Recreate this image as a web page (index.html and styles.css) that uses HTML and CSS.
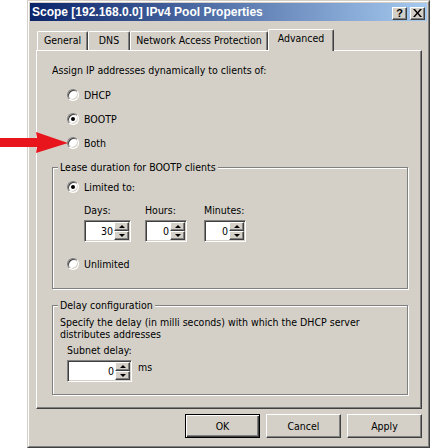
FILE: index.html
```html
<!DOCTYPE html>
<html>
<head>
<meta charset="utf-8">
<link rel="stylesheet" href="styles.css">
</head>
<body>
<div class="dialog">
  <div class="frame">
    <div class="titlebar">
      <span class="title">Scope [192.168.0.0] IPv4 Pool Properties</span>
      <div class="tbtns">
        <div class="tbtn">?</div>
        <div class="tbtn"><svg width="9" height="8" viewBox="0 0 9 8"><path d="M0 0h2l2.5 3 2.5-3h2l-3.5 4 3.5 4h-2l-2.5-3-2.5 3h-2l3.5-4z" fill="#000"/></svg></div>
      </div>
    </div>
    <div class="tabs">
      <div class="tab w-general">General</div>
      <div class="tab w-dns">DNS</div>
      <div class="tab w-nap">Network Access Protection</div>
      <div class="tab active w-adv">Advanced</div>
    </div>
    <div class="panel">
      <div class="assign">Assign IP addresses dynamically to clients of:</div>
      <div class="radios">
        <div class="rrow"><span class="radio"></span><span>DHCP</span></div>
        <div class="rrow"><span class="radio on"></span><span>BOOTP</span></div>
        <div class="rrow"><span class="radio"></span><span>Both</span></div>
      </div>
      <div class="group lease">
        <div class="legend">Lease duration for BOOTP clients</div>
        <div class="grow limited"><span class="radio on"></span><span>Limited to:</span></div>
        <div class="cols">
          <div class="col c-days">
            <div class="clabel">Days:</div>
            <div class="spin s-days"><span class="val">30</span><span class="sbtns"><span class="sb up"></span><span class="sb dn"></span></span></div>
          </div>
          <div class="col c-hours">
            <div class="clabel">Hours:</div>
            <div class="spin s-hm"><span class="val">0</span><span class="sbtns"><span class="sb up"></span><span class="sb dn"></span></span></div>
          </div>
          <div class="col">
            <div class="clabel">Minutes:</div>
            <div class="spin s-hm"><span class="val">0</span><span class="sbtns"><span class="sb up"></span><span class="sb dn"></span></span></div>
          </div>
        </div>
        <div class="grow unlimited"><span class="radio"></span><span>Unlimited</span></div>
      </div>
      <div class="group delay">
        <div class="legend">Delay configuration</div>
        <div class="desc">Specify the delay (in milli seconds) with which the DHCP server<br>distributes addresses</div>
        <div class="subnet">Subnet delay:</div>
        <div class="srow">
          <div class="spin s-delay"><span class="val">0</span><span class="sbtns"><span class="sb up"></span><span class="sb dn"></span></span></div>
          <span class="ms">ms</span>
        </div>
      </div>
    </div>
    <div class="buttons">
      <div class="btn default"><span>OK</span></div>
      <div class="btn"><span>Cancel</span></div>
      <div class="btn"><span>Apply</span></div>
    </div>
  </div>
</div>
<svg class="arrow" width="70" height="22" viewBox="0 0 70 22">
  <polygon points="0,6 37,6 36,0 68,11 36,21 37,15 0,15" fill="#e8151d"/>
</svg>
</body>
</html>
```
FILE: styles.css
```css
* { box-sizing: border-box; }
html, body { margin: 0; padding: 0; }
body {
  background: #fff;
  font-family: "DejaVu Sans Condensed", "DejaVu Sans", sans-serif;
  font-stretch: condensed;
  font-size: 10.5px;
  line-height: 13px;
  color: #000;
  width: 431px;
  height: 448px;
  overflow: hidden;
  position: relative;
}
.dialog {
  margin-left: 27px;
  width: 403px;
  height: 448px;
  background: #d4d0c8;
  border: 1px solid;
  border-color: #d4d0c8 #404040 #404040 #d4d0c8;
}
.frame {
  height: 100%;
  border: 1px solid;
  border-color: #fff #808080 #808080 #fff;
  padding: 1px;
  display: flex;
  flex-direction: column;
}
.titlebar {
  height: 18px;
  background: linear-gradient(to right, #0a246a 0%, #a6caf0 100%);
  display: flex;
  align-items: center;
  padding-left: 2px;
  padding-right: 2px;
}
.title {
  color: #fff;
  font-family: "Liberation Sans", Arial, sans-serif;
  font-stretch: normal;
  font-weight: bold;
  font-size: 12px;
  flex: 1;
  white-space: nowrap;
}
.tbtns { display: flex; gap: 3px; margin-top: 2px; }
.tbtn {
  width: 15px;
  height: 13px;
  background: #d4d0c8;
  border: 1px solid;
  border-color: #fff #404040 #404040 #fff;
  box-shadow: inset -1px -1px #808080;
  display: flex;
  align-items: center;
  justify-content: center;
  font-family: "Liberation Sans", Arial, sans-serif;
  font-weight: bold;
  font-size: 11px;
  line-height: 11px;
}
.tabs {
  display: flex;
  align-items: flex-end;
  margin-top: 8px;
  padding-left: 7px;
  height: 21px;
  position: relative;
  z-index: 1;
}
.tab {
  height: 19px;
  border-top: 1px solid #fff;
  border-left: 1px solid #fff;
  border-right: 1px solid #404040;
  box-shadow: inset -1px 0 #808080;
  border-radius: 2px 2px 0 0;
  display: flex;
  align-items: center;
  justify-content: center;
  padding-bottom: 1px;
  white-space: nowrap;
}
.tab.active {
  height: 22px;
  margin-bottom: -1px;
  background: #d4d0c8;
  padding-bottom: 4px;
}
.w-general { width: 51px; }
.w-dns { width: 42px; }
.w-nap { width: 138px; }
.w-adv { width: 66px; }
.panel {
  margin-left: 6px;
  width: 386px;
  height: 359px;
  border: 1px solid;
  border-color: #fff #404040 #404040 #fff;
  box-shadow: inset -1px -1px #808080;
  padding-top: 13px;
}
.assign { margin-left: 15px; }
.radios { margin-top: 6px; margin-left: 30px; }
.rrow { height: 24px; display: flex; align-items: center; }
.radio {
  width: 12px;
  height: 12px;
  border-radius: 50%;
  background: #fff;
  border: 1px solid;
  border-color: #808080 #fff #fff #808080;
  box-shadow: inset 1px 1px #404040, inset -1px -1px #d4d0c8;
  margin-right: 5px;
  position: relative;
  flex: none;
}
.radio.on::after {
  content: "";
  position: absolute;
  left: 3px;
  top: 3px;
  width: 4px;
  height: 4px;
  border-radius: 50%;
  background: #000;
}
.group {
  margin-left: 15px;
  width: 356px;
  border: 1px solid #808080;
  box-shadow: inset 1px 1px #fff, 1px 1px #fff;
}
.lease { margin-top: 12px; height: 122px; }
.delay { margin-top: 16px; height: 90px; }
.legend {
  margin-top: -7px;
  margin-left: 5px;
  padding: 0 2px;
  background: #d4d0c8;
  width: fit-content;
}
.grow { display: flex; align-items: center; height: 16px; margin-left: 14px; }
.limited { margin-top: 5px; }
.cols { display: flex; margin-left: 31px; margin-top: 9px; }
.c-days { width: 61px; }
.c-hours { width: 59px; }
.clabel { height: 13px; margin-bottom: 3px; }
.spin {
  display: flex;
  height: 22px;
  background: #fff;
  border: 1px solid;
  border-color: #808080 #fff #fff #808080;
  box-shadow: inset 1px 1px #404040, inset -1px -1px #d4d0c8;
  padding: 1px;
}
.s-days { width: 47px; }
.s-hm { width: 42px; }
.s-delay { width: 65px; }
.val {
  flex: 1;
  text-align: right;
  padding-right: 1px;
  line-height: 19px;
}
.sbtns {
  width: 15px;
  display: flex;
  flex-direction: column;
}
.sb {
  flex: 1;
  background: #d4d0c8;
  border: 1px solid;
  border-color: #fff #404040 #404040 #fff;
  box-shadow: inset -1px -1px #808080;
  display: flex;
  align-items: center;
  justify-content: center;
}
.sb::after {
  content: "";
  width: 0;
  height: 0;
  border-left: 3px solid transparent;
  border-right: 3px solid transparent;
}
.sb.up::after { border-bottom: 3px solid #000; }
.sb.dn::after { border-top: 3px solid #000; }
.unlimited { margin-top: 14px; }
.desc { margin-left: 7px; margin-top: 4px; line-height: 12px; }
.subnet { margin-left: 14px; margin-top: 4px; }
.srow { display: flex; margin-left: 14px; margin-top: 3px; align-items: flex-start; }
.ms { margin-left: 6px; margin-top: 1px; }
.buttons {
  display: flex;
  justify-content: flex-end;
  gap: 6px;
  margin-top: 5px;
  padding-right: 5px;
}
.btn {
  width: 75px;
  height: 24px;
  border: 1px solid;
  border-color: #fff #404040 #404040 #fff;
  box-shadow: inset -1px -1px #808080;
  display: flex;
  align-items: center;
  justify-content: center;
}
.btn.default {
  border: 1px solid #000;
  box-shadow: inset 1px 1px #fff, inset -1px -1px #404040, inset -2px -2px #808080;
}
.arrow {
  position: absolute;
  left: 0;
  top: 132px;
}
```
